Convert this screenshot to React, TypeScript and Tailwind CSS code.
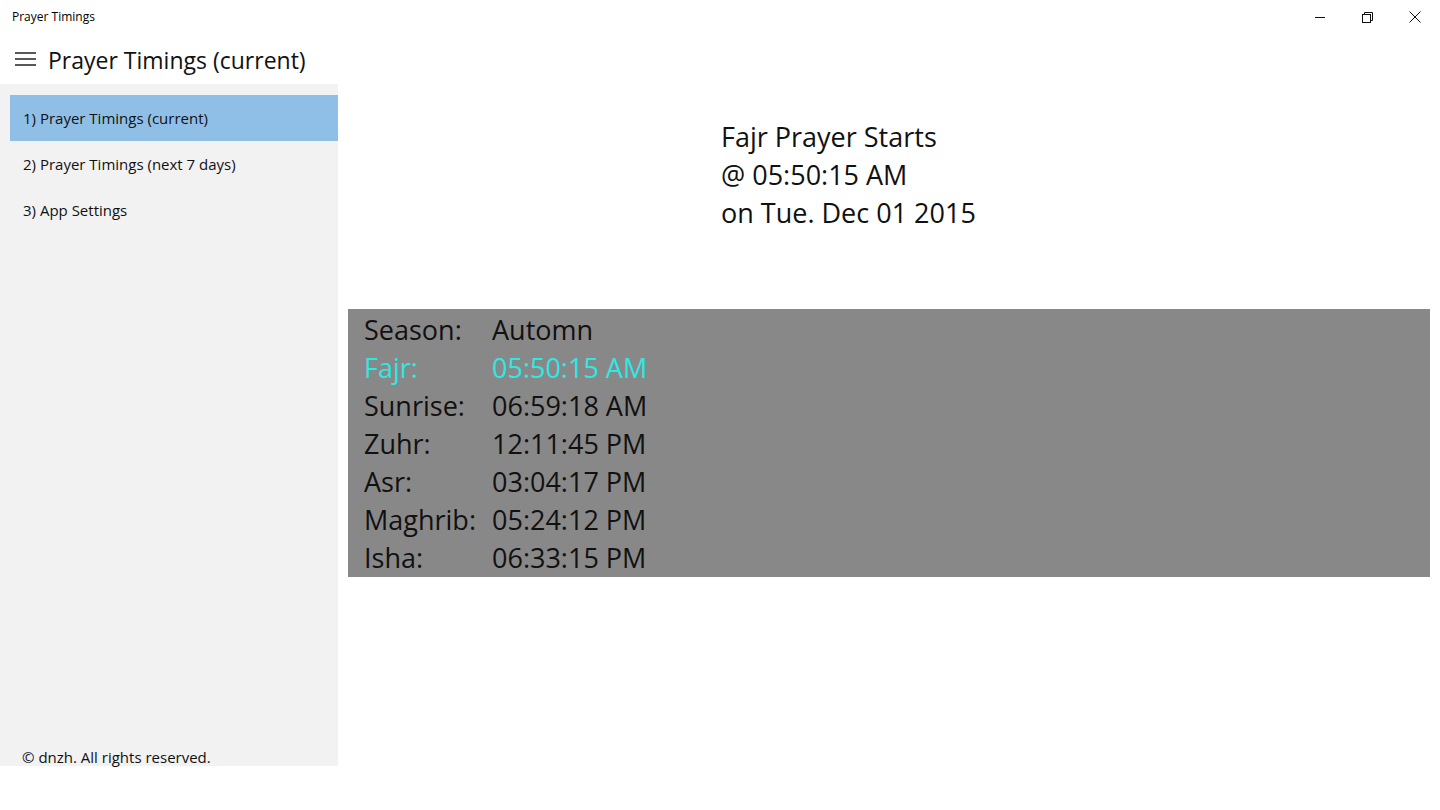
import React from "react";

const rows: [string, string, boolean][] = [
  ["Season:", "Automn", false],
  ["Fajr:", "05:50:15 AM", true],
  ["Sunrise:", "06:59:18 AM", false],
  ["Zuhr:", "12:11:45 PM", false],
  ["Asr:", "03:04:17 PM", false],
  ["Maghrib:", "05:24:12 PM", false],
  ["Isha:", "06:33:15 PM", false],
];

export default function App() {
  return (
    <div
      className="w-[1440px] h-[810px] bg-white text-black flex flex-col overflow-hidden"
      style={{ fontFamily: '"Open Sans", "Noto Sans", sans-serif' }}
    >
      {/* title bar */}
      <div className="h-[34px] flex items-center shrink-0">
        <div className="pl-[12px] text-[12px] flex-1 pb-[1px]">Prayer Timings</div>
        <div className="flex h-full">
          <div className="w-[46px] h-full flex items-center justify-center">
            <svg width="10" height="10" viewBox="0 0 10 10">
              <path d="M0 5.5H10" stroke="#111" strokeWidth="1" />
            </svg>
          </div>
          <div className="w-[48px] h-full flex items-center justify-center">
            <svg width="11" height="11" viewBox="0 0 11 11" fill="none" stroke="#111" strokeWidth="1">
              <rect x="0.5" y="2.5" width="8" height="8" />
              <path d="M2.5 2.5V0.5H10.5V8.5H8.5" />
            </svg>
          </div>
          <div className="w-[48px] h-full flex items-center justify-center mr-[1px]">
            <svg width="12" height="12" viewBox="0 0 12 12" stroke="#111" strokeWidth="1">
              <path d="M0.5 0.5L11.5 11.5M11.5 0.5L0.5 11.5" />
            </svg>
          </div>
        </div>
      </div>
      {/* header */}
      <div className="h-[50px] flex items-center shrink-0">
        <div className="w-[48px] flex items-center justify-start pl-[15px]">
          <svg width="21" height="14" viewBox="0 0 21 14" stroke="#222" strokeWidth="1.3">
            <path d="M0 1H21M0 7H21M0 13H21" />
          </svg>
        </div>
        <div className="text-[23px] leading-none pt-[3px] text-[#111]">Prayer Timings (current)</div>
      </div>
      <div className="flex flex-1 min-h-0">
        {/* sidebar */}
        <div className="w-[338px] h-[682px] bg-[#f2f2f2] flex flex-col pt-[11px] text-[15px] text-[#111]">
          <div className="ml-[10px] h-[46px] bg-[#8fbfe7] flex items-center pl-[13px]">1) Prayer Timings (current)</div>
          <div className="h-[46px] flex items-center pl-[23px]">2) Prayer Timings (next 7 days)</div>
          <div className="h-[46px] flex items-center pl-[23px]">3) App Settings</div>
          <div className="flex-1" />
          <div className="pl-[22px] h-[18px] leading-[18px]">© dnzh. All rights reserved.</div>
        </div>
        {/* main */}
        <div className="flex-1 flex flex-col pl-[10px] pr-[10px]">
          <div className="h-[225px] pl-[373px] pt-[34px] text-[27px] leading-[38px] text-[#111]">
            <div>Fajr Prayer Starts</div>
            <div>@ 05:50:15 AM</div>
            <div>on Tue. Dec 01 2015</div>
          </div>
          <div className="bg-[#888888] h-[268px] pl-[16px] pt-[2px] text-[27px] leading-[38px] text-[#111]">
            {rows.map(([k, v, hl]) => (
              <div key={k} className={`flex ${hl ? "text-[#2ee8e4]" : ""}`}>
                <div className="w-[128px]">{k}</div>
                <div>{v}</div>
              </div>
            ))}
          </div>
        </div>
      </div>
    </div>
  );
}
